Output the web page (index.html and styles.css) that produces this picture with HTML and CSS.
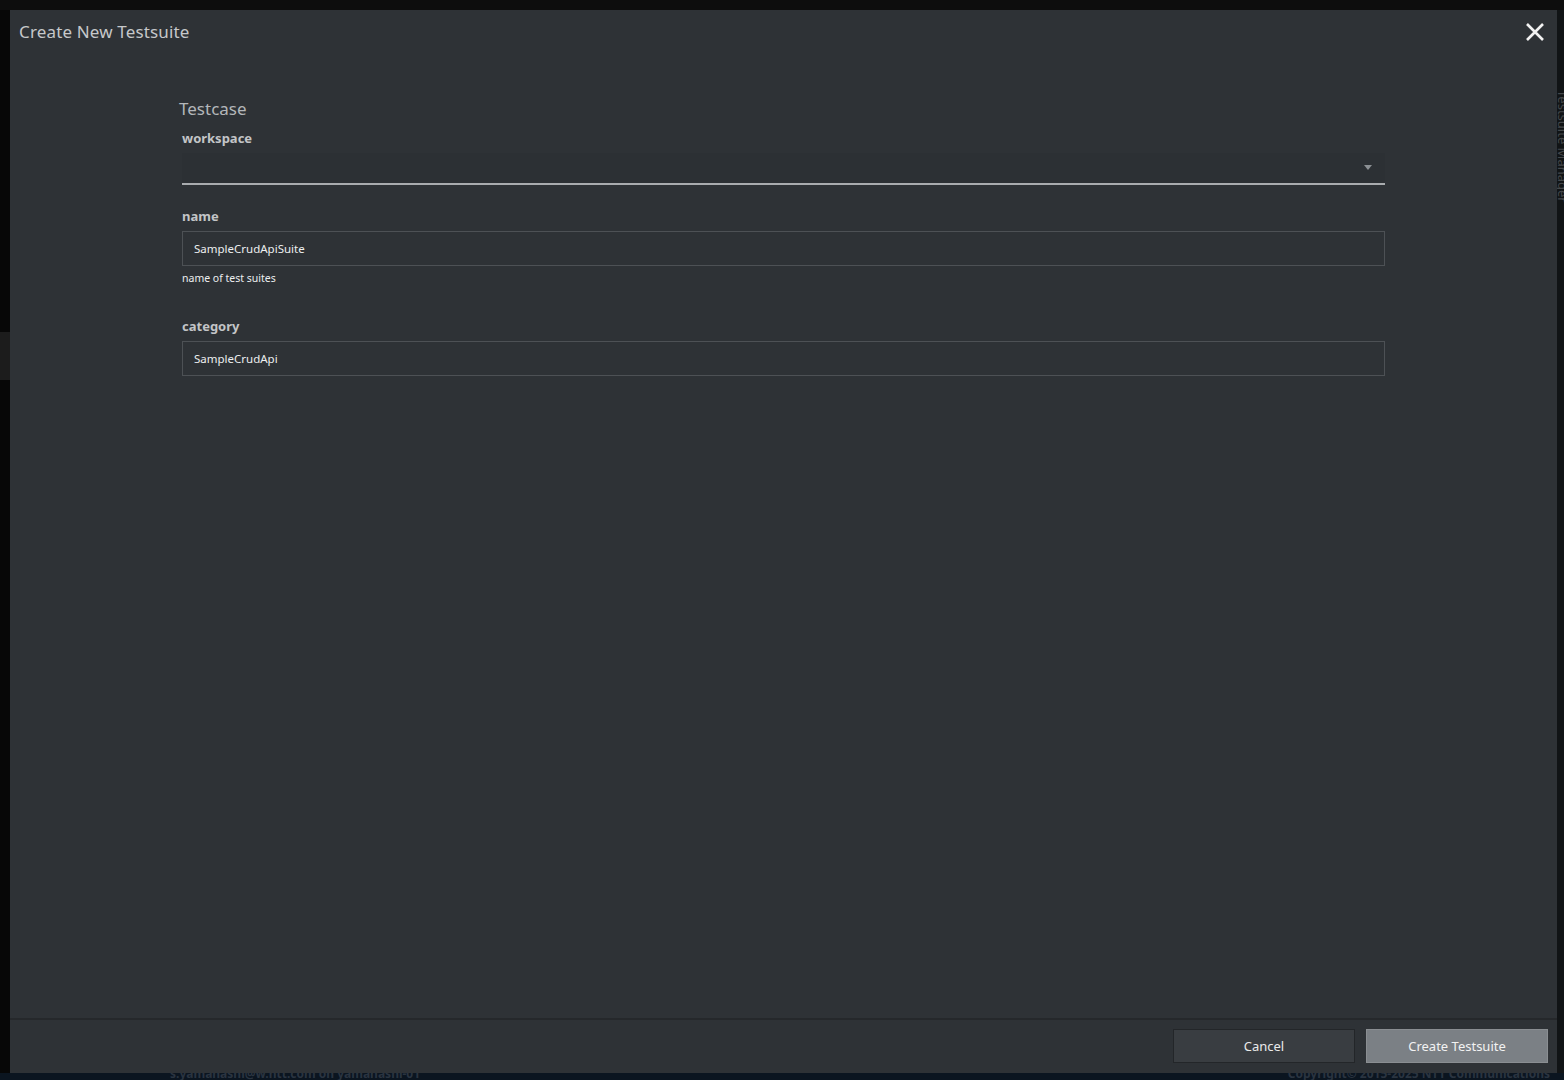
FILE: index.html
```html
<!DOCTYPE html>
<html>
<head>
<meta charset="utf-8">
<link rel="stylesheet" href="styles.css">
</head>
<body>
<div class="backdrop">
  <div class="bg-top"></div>
  <div class="bg-side-left"><div class="bg-tab"></div></div>
  <div class="bg-side-right"><span class="vtext">Testsuite Manager</span></div>
  <div class="bg-bottom">
    <span class="status">s.yamanashi@w.ntt.com on yamanashi-01</span>
    <span class="copy">Copyright© 2015-2025 NTT Communications</span>
  </div>
</div>
<div class="modal">
  <header class="modal-header">
    <h1 class="modal-title">Create New Testsuite</h1>
    <button class="close" aria-label="close">
      <svg width="20" height="20" viewBox="0 0 20 20"><path d="M2 2 L18 18 M18 2 L2 18" stroke="#f2f2f2" stroke-width="2.6" stroke-linecap="butt"/></svg>
    </button>
  </header>
  <main class="modal-body">
    <div class="form">
      <div class="section-title">Testcase</div>
      <div class="field field-ws">
        <label class="label">workspace</label>
        <div class="select"><span class="caret"></span></div>
      </div>
      <div class="field field-name">
        <label class="label">name</label>
        <div class="input">SampleCrudApiSuite</div>
        <div class="help">name of test suites</div>
      </div>
      <div class="field field-cat">
        <label class="label">category</label>
        <div class="input">SampleCrudApi</div>
      </div>
    </div>
  </main>
  <footer class="modal-footer">
    <button class="btn btn-cancel">Cancel</button>
    <button class="btn btn-primary">Create Testsuite</button>
  </footer>
</div>
</body>
</html>
```

FILE: styles.css
```css
* { box-sizing: border-box; }
html, body { margin: 0; padding: 0; }
body {
  width: 1564px;
  height: 1080px;
  background: #0a0a0a;
  font-family: "Noto Sans", "DejaVu Sans", sans-serif;
  overflow: hidden;
  position: relative;
}
.backdrop { position: absolute; inset: 0; }
.bg-top { position: absolute; left: 0; top: 0; width: 100%; height: 10px; background: #0d0d0d; }
.bg-side-left { position: absolute; left: 0; top: 10px; width: 10px; height: 1063px; background: #070707; }
.bg-tab { position: absolute; left: 0; top: 322px; width: 10px; height: 48px; background: #1c1c1c; }
.bg-side-right { position: absolute; right: 0; top: 10px; width: 7px; height: 1063px; background: #111416; overflow: hidden; }
.vtext { position: absolute; left: -3px; top: 80px; writing-mode: vertical-rl; color: #45484b; font-size: 13px; }
.bg-bottom {
  position: absolute; left: 0; bottom: 0; width: 100%; height: 7px;
  background: #0b1520; overflow: hidden; font-size: 12px; color: #2a3440; font-weight: bold;
}
.status { position: absolute; left: 170px; top: -8px; }
.copy { position: absolute; right: 14px; top: -8px; }

.modal {
  position: absolute;
  left: 10px; top: 10px;
  width: 1547px; height: 1063px;
  background: #2e3236;
  display: flex; flex-direction: column;
}
.modal-header {
  height: 44px;
  display: flex; align-items: center; justify-content: space-between;
  padding: 0 12px 0 9px;
}
.modal-title {
  margin: 0; font-size: 17px; font-weight: normal; color: #c6c8ca;
  position: relative; top: -1px; letter-spacing: 0.15px;
}
.close { background: none; border: 0; padding: 0; width: 20px; height: 20px; cursor: pointer; display: flex; }
.modal-body { flex: 1; padding: 44px 0 0 168px; }
.form { width: 1207px; }
.section-title { font-size: 17px; color: #b4b7ba; margin-left: 1px; line-height: 22px; }
.field { margin-left: 4px; }
.label { display: block; font-size: 13px; font-weight: bold; color: #c3c5c7; line-height: 18px; }
.field-ws .label { margin-top: 9px; }
.select {
  height: 32px; margin-top: 6px;
  background: #2c3034;
  border-bottom: 2px solid #a9acaf;
  position: relative;
}
.caret {
  position: absolute; right: 13px; top: 12px;
  border-left: 4.5px solid transparent; border-right: 4.5px solid transparent;
  border-top: 5px solid #8c9094;
}
.field-name .label { margin-top: 22px; }
.input {
  height: 35px; margin-top: 6px;
  border: 1px solid #4d5155;
  font-size: 11.5px; color: #eceeef;
  padding: 0 11px; display: flex; align-items: center;
}
.help { font-size: 10.5px; color: #eceeef; margin-top: 5px; line-height: 14px; }
.field-cat .label { margin-top: 32px; }
.modal-footer {
  height: 55px;
  border-top: 2px solid #25282b;
  display: flex; justify-content: flex-end; align-items: flex-start;
  gap: 11px; padding: 9px 9px 0 0;
}
.btn {
  width: 182px; height: 34px;
  font-family: inherit; font-size: 13px; cursor: pointer;
}
.btn-cancel { background: #393d41; border: 1px solid #232629; color: #eaeaea; }
.btn-primary { background: #7b8085; border: 1px solid #8a8e92; color: #f2f2f2; }
```
